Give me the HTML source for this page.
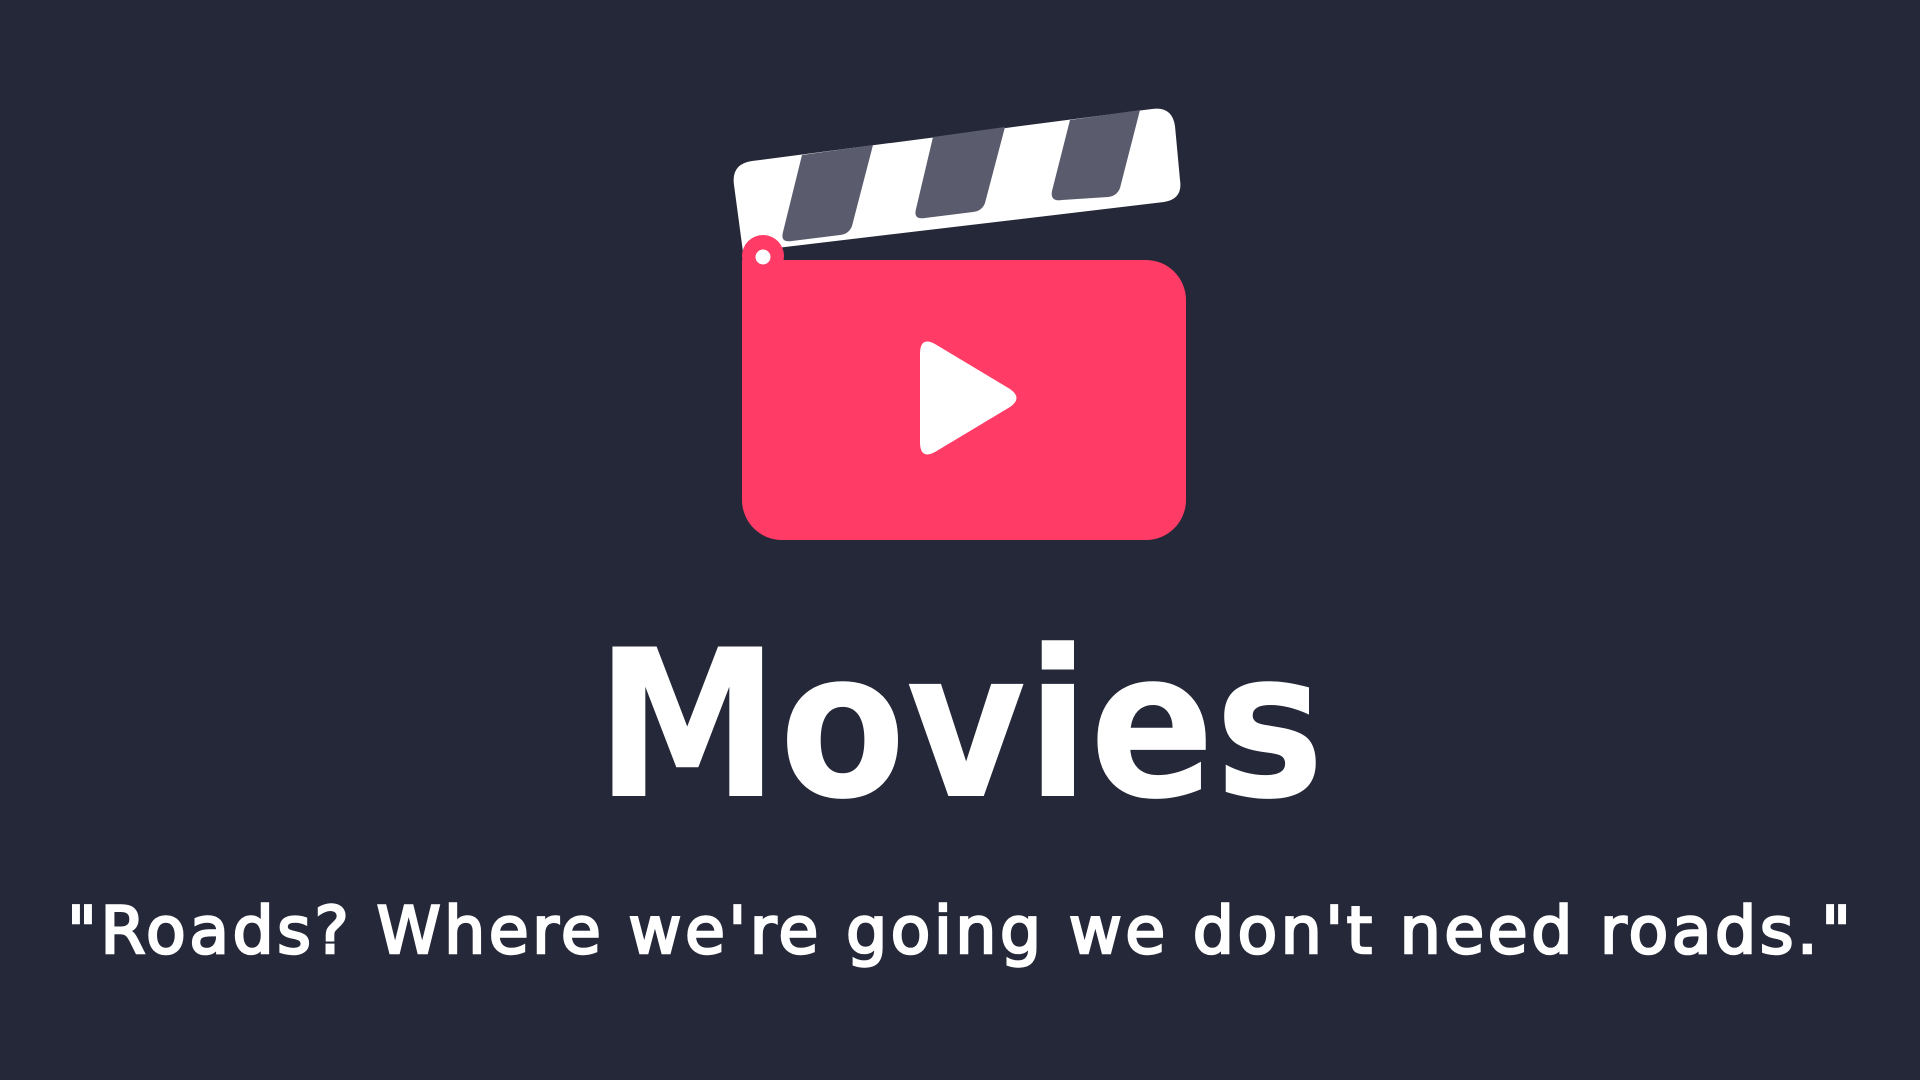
<!DOCTYPE html>
<html><head><meta charset="utf-8"><style>
html,body{margin:0;padding:0;background:#242838;width:1920px;height:1080px;overflow:hidden}
</style></head><body>
<svg width="1920" height="1080" viewBox="0 0 1920 1080" xmlns="http://www.w3.org/2000/svg">
<rect width="1920" height="1080" fill="#242838"/>
<path d="M752 161 L1152 109 Q1172 106 1175 126 L1180 180 Q1183 199 1164 202 L743 252 L734 185 Q731 164 752 161 Z" fill="#ffffff"/>
<path d="M802 155 L873 145 L852 226 Q849 234 840 235 L792 241 Q780 243 783 232 Z" fill="#5a5b6d"/>
<path d="M933 137 L1005 127 L985 203 Q982 211 973 212 L925 218 Q913 220 916 209 Z" fill="#5a5b6d"/>
<path d="M1070 120 L1140 110 L1120 188 Q1117 196 1108 197 L1062 200 Q1050 202 1052 191 Z" fill="#5a5b6d"/>
<rect x="742" y="260" width="444" height="280" rx="40" fill="#ff3b66"/>
<rect x="742" y="260" width="60" height="60" fill="#ff3b66"/>
<circle cx="763" cy="256" r="21" fill="#ff3b66"/>
<circle cx="763" cy="257" r="7.5" fill="#ffffff"/>
<path d="M920 354 Q920 336 935 344 L1010 389 Q1023 398 1010 407 L935 452 Q920 460 920 442 Z" fill="#ffffff"/>
<text x="960" y="796" text-anchor="middle" font-family="DejaVu Sans, sans-serif" font-weight="bold" font-size="205" fill="#ffffff" textLength="729" lengthAdjust="spacingAndGlyphs">Movies</text>
<text x="959" y="953" text-anchor="middle" font-family="DejaVu Sans, sans-serif" font-size="65" fill="#ffffff" stroke="#ffffff" stroke-width="2.5" paint-order="stroke" textLength="1784" lengthAdjust="spacing">"Roads? Where we're going we don't need roads."</text>
</svg>
</body></html>
